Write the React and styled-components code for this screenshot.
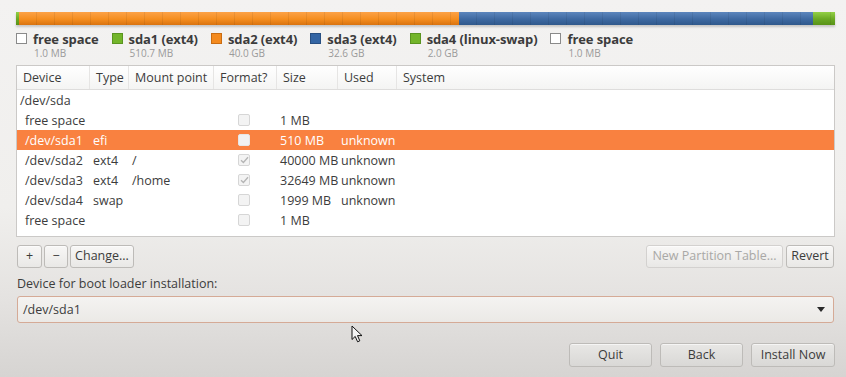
import React from "react";
import styled, { createGlobalStyle } from "styled-components";

const GlobalStyle = createGlobalStyle`
  html, body { margin: 0; padding: 0; }
  body {
    background: linear-gradient(180deg, #f3f2f1 0%, #f0efed 55%, #e4e2e0 80%, #d6d4d2 100%);
    font-family: "Open Sans", "Noto Sans", sans-serif;
    color: #3c3c3c;
  }
  * { box-sizing: border-box; }
`;

const Page = styled.div`
  position: relative;
  width: 846px;
  height: 377px;
  padding: 12px 11px 0 16px;
  display: flex;
  flex-direction: column;
  overflow: hidden;
`;

const Bar = styled.div`
  display: flex;
  height: 13px;
  box-shadow: 0 2px 2px rgba(0, 0, 0, 0.18);
`;

const palette = {
  green: ["#93d046", "#6aa823", "#5a9318"],
  orange: ["#fca247", "#f58e1f", "#d97310"],
  blue: ["#5c86bd", "#3e69a1", "#30598c"],
};

const Segment = styled.div`
  flex: ${(p) => p.$grow} 0 0;
  min-width: ${(p) => p.$min}px;
  background-image:
    repeating-linear-gradient(90deg, transparent 0 17px, rgba(0, 0, 0, 0.07) 17px 18px),
    linear-gradient(180deg, ${(p) => palette[p.$c][0]} 0%, ${(p) => palette[p.$c][1]} 55%, ${(p) => palette[p.$c][2]} 100%);
`;

const Legend = styled.div`
  display: flex;
  gap: 13px;
  margin-top: 7px;
  height: 27px;
`;

const LegendItem = styled.div`
  display: flex;
  gap: 6px;
  align-items: flex-start;
`;

const swatchColors = {
  free: ["#ffffff", "#8a8a8a"],
  green: ["#73b52a", "#5a9420"],
  orange: ["#f48a1e", "#c96c12"],
  blue: ["#3465a4", "#284f82"],
};

const Swatch = styled.span`
  width: 11px;
  height: 11px;
  margin-top: 1px;
  border: 1px solid ${(p) => swatchColors[p.$c][1]};
  background: ${(p) => swatchColors[p.$c][0]};
`;

const LegendText = styled.div`
  display: flex;
  flex-direction: column;
  gap: 1px;
`;

const LegendName = styled.span`
  font-weight: 700;
  font-size: 13px;
  line-height: 14px;
  color: #3c3c3c;
  letter-spacing: -0.1px;
`;

const LegendSize = styled.span`
  font-size: 10px;
  line-height: 12px;
  color: #9a9a9a;
  padding-left: 1px;
`;

const Table = styled.div`
  margin-top: 6px;
  height: 172px;
  border: 1px solid #cbc9c7;
  background: #ffffff;
  font-size: 12.5px;
`;

const COLS = "73px 39px 85px 63px 61px 59px 1fr";

const HeaderRow = styled.div`
  display: grid;
  grid-template-columns: ${COLS};
  height: 24px;
  background: linear-gradient(180deg, #ffffff 0%, #f4f4f3 100%);
  border-bottom: 1px solid #dedddc;
`;

const HeaderCell = styled.div`
  display: flex;
  align-items: center;
  padding-left: 6px;
  color: #3c3c3c;
  border-right: ${(p) => (p.$last ? "none" : "1px solid #e6e5e4")};
  white-space: nowrap;
`;

const Row = styled.div`
  display: grid;
  grid-template-columns: ${COLS};
  height: 20px;
  background: ${(p) => (p.$selected ? "#f98140" : "transparent")};
  color: ${(p) => (p.$selected ? "#ffffff" : "#3c3c3c")};
`;

const Cell = styled.div`
  display: flex;
  align-items: center;
  justify-content: ${(p) => (p.$center ? "center" : "flex-start")};
  padding-left: ${(p) => (p.$center ? 0 : p.$indent ? 8 : 3)}px;
  white-space: nowrap;
  overflow: visible;
  grid-column: ${(p) => (p.$span ? "1 / -1" : "auto")};
`;

const Check = styled.span`
  width: 12px;
  height: 12px;
  border-radius: 2px;
  border: 1px solid ${(p) => (p.$selected ? "#e6e6e6" : "#d6d6d6")};
  background: ${(p) => (p.$selected ? "#f1f1f1" : "#f3f3f3")};
  display: flex;
  align-items: center;
  justify-content: center;
  margin-right: 3px;
`;

const Toolbar = styled.div`
  display: flex;
  align-items: center;
  margin-top: 8px;
  height: 23px;
`;

const Group = styled.div`
  display: flex;
  gap: ${(p) => p.$gap}px;
  margin-left: ${(p) => (p.$right ? "auto" : "1px")};
  margin-right: ${(p) => (p.$right ? "1px" : "0")};
`;

const Button = styled.button`
  height: ${(p) => (p.$tall ? 24 : 23)}px;
  width: ${(p) => (p.$w ? `${p.$w}px` : "auto")};
  padding: 0 ${(p) => (p.$w ? 0 : 4)}px;
  border: 1px solid ${(p) => (p.$disabled ? "#d3d1cf" : "#bdbbb8")};
  border-radius: 3px;
  background: ${(p) =>
    p.$tall
      ? "linear-gradient(180deg, #e8e7e5 0%, #d9d8d6 100%)"
      : "linear-gradient(180deg, #f8f7f6 0%, #e9e8e6 100%)"};
  color: ${(p) => (p.$disabled ? "#a9a8a6" : "#3c3c3c")};
  font-family: "Open Sans", "Noto Sans", sans-serif;
  font-size: 12.5px;
  line-height: 1;
  display: flex;
  align-items: center;
  justify-content: center;
  box-shadow: inset 0 1px 0 rgba(255, 255, 255, 0.6);
  cursor: default;
`;

const Label = styled.div`
  margin-top: 8px;
  padding-left: 1px;
  font-size: 12.5px;
  line-height: 16px;
  color: #3c3c3c;
`;

const Combo = styled.div`
  margin-top: 4px;
  margin-left: 1px;
  margin-right: 1px;
  height: 27px;
  border: 1px solid #d5aa96;
  border-radius: 3px;
  background: linear-gradient(180deg, #f4f3f1 0%, #ebe9e6 100%);
  display: flex;
  align-items: center;
  justify-content: space-between;
  padding: 0 8px 0 5px;
  font-size: 12.5px;
  color: #3c3c3c;
`;

const Arrow = styled.span`
  width: 0;
  height: 0;
  border-left: 4px solid transparent;
  border-right: 4px solid transparent;
  border-top: 5px solid #2a2a2a;
`;

const Footer = styled.div`
  display: flex;
  justify-content: flex-end;
  gap: 8px;
  margin-top: 20px;
`;

const Cursor = styled.svg`
  position: absolute;
  left: 351px;
  top: 325px;
`;

const segments = [
  { c: "green", grow: 1, min: 3 },
  { c: "orange", grow: 40000 + 510, min: 0 },
  { c: "blue", grow: 32649, min: 0 },
  { c: "green", grow: 1999, min: 0 },
];

const legend = [
  { c: "free", name: "free space", size: "1.0 MB" },
  { c: "green", name: "sda1 (ext4)", size: "510.7 MB" },
  { c: "orange", name: "sda2 (ext4)", size: "40.0 GB" },
  { c: "blue", name: "sda3 (ext4)", size: "32.6 GB" },
  { c: "green", name: "sda4 (linux-swap)", size: "2.0 GB" },
  { c: "free", name: "free space", size: "1.0 MB" },
];

const headers = ["Device", "Type", "Mount point", "Format?", "Size", "Used", "System"];

const rows = [
  { dev: "free space", type: "", mount: "", fmt: false, size: "1 MB", used: "" },
  { dev: "/dev/sda1", type: "efi", mount: "", fmt: false, size: "510 MB", used: "unknown", selected: true },
  { dev: "/dev/sda2", type: "ext4", mount: "/", fmt: true, size: "40000 MB", used: "unknown" },
  { dev: "/dev/sda3", type: "ext4", mount: "/home", fmt: true, size: "32649 MB", used: "unknown" },
  { dev: "/dev/sda4", type: "swap", mount: "", fmt: false, size: "1999 MB", used: "unknown" },
  { dev: "free space", type: "", mount: "", fmt: false, size: "1 MB", used: "" },
];

function CheckBox({ checked, selected }) {
  return (
    <Check $selected={selected}>
      {checked && (
        <svg width="9" height="8" viewBox="0 0 9 8">
          <path d="M1 4.2 L3.4 6.5 L8 1.2" fill="none" stroke="#b4b4b4" strokeWidth="1.3" />
        </svg>
      )}
    </Check>
  );
}

export default function App() {
  return (
    <>
      <GlobalStyle />
      <Page>
        <Bar>
          {segments.map((s, i) => (
            <Segment key={i} $c={s.c} $grow={s.grow} $min={s.min} />
          ))}
        </Bar>
        <Legend>
          {legend.map((l, i) => (
            <LegendItem key={i}>
              <Swatch $c={l.c} />
              <LegendText>
                <LegendName>{l.name}</LegendName>
                <LegendSize>{l.size}</LegendSize>
              </LegendText>
            </LegendItem>
          ))}
        </Legend>
        <Table>
          <HeaderRow>
            {headers.map((h, i) => (
              <HeaderCell key={h} $last={i === headers.length - 1}>
                {h}
              </HeaderCell>
            ))}
          </HeaderRow>
          <Row>
            <Cell $span>/dev/sda</Cell>
          </Row>
          {rows.map((r, i) => (
            <Row key={i} $selected={r.selected}>
              <Cell $indent>{r.dev}</Cell>
              <Cell>{r.type}</Cell>
              <Cell>{r.mount}</Cell>
              <Cell $center>
                <CheckBox checked={r.fmt} selected={r.selected} />
              </Cell>
              <Cell>{r.size}</Cell>
              <Cell>{r.used}</Cell>
              <Cell />
            </Row>
          ))}
        </Table>
        <Toolbar>
          <Group $gap={2}>
            <Button $w={25}>+</Button>
            <Button $w={24}>−</Button>
            <Button $w={64}>Change...</Button>
          </Group>
          <Group $gap={3} $right>
            <Button $w={137} $disabled>New Partition Table...</Button>
            <Button $w={48}>Revert</Button>
          </Group>
        </Toolbar>
        <Label>Device for boot loader installation:</Label>
        <Combo>
          <span>/dev/sda1</span>
          <Arrow />
        </Combo>
        <Footer>
          <Button $tall $w={83}>Quit</Button>
          <Button $tall $w={83}>Back</Button>
          <Button $tall $w={84}>Install Now</Button>
        </Footer>
        <Cursor width="13" height="18" viewBox="0 0 13 18">
          <path
            d="M1 1 L1 14.5 L4.2 11.4 L6.6 16.8 L8.8 15.8 L6.5 10.6 L11 10.6 Z"
            fill="#f4f4f4"
            stroke="#111"
            strokeWidth="1"
            strokeLinejoin="round"
          />
        </Cursor>
      </Page>
    </>
  );
}
